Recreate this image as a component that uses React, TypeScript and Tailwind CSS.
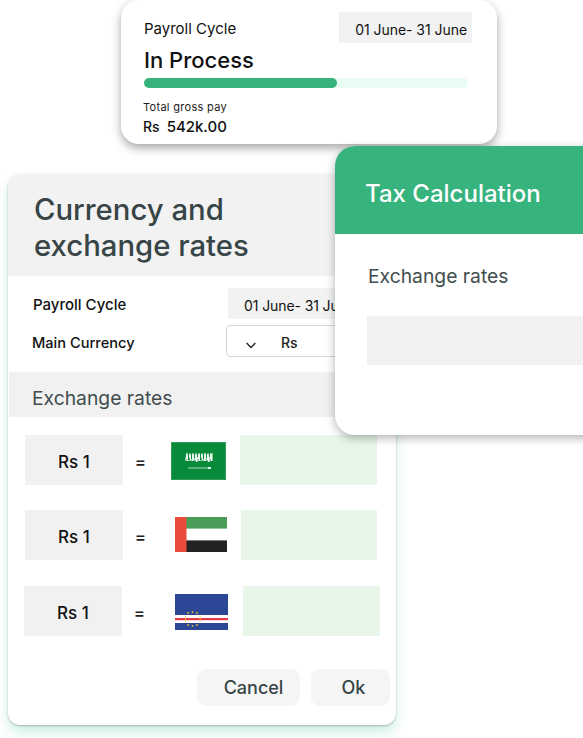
import React from "react";

function SaudiFlag() {
  const marks: number[][] = [];
  for (let i = 0; i < 27; i++) {
    marks.push([14 + i, 11 + ((i * 7) % 3), 1 + (i % 2) * 0.5, 4 + ((i * 5) % 4)]);
  }
  return (
    <svg viewBox="0 0 55 38" className="block h-[38px] w-[55px]">
      <rect width="55" height="38" fill="#078a3a" />
      <rect x="0.5" y="0.5" width="54" height="37" fill="none" stroke="#4fa96f" strokeWidth="0.6" />
      <rect x="14" y="11" width="28" height="8" fill="#8fc9a2" />
      {marks.map(([x, y, w, h], i) => (
        <rect key={i} x={x} y={y} width={w} height={h} fill={i % 3 === 0 ? "#078a3a" : "#eef7f0"} />
      ))}
      <path d="M17 26h21" stroke="#d8ecde" strokeWidth="0.8" />
      <path d="M37 25h3v2h-3z" fill="#d8ecde" />
    </svg>
  );
}

function UaeFlag() {
  return (
    <svg viewBox="0 0 52 35" className="block h-[35px] w-[52px]">
      <rect width="52" height="35" fill="#fff" />
      <rect x="11" width="41" height="11.6" fill="#4a9c58" />
      <rect x="11" y="23.4" width="41" height="11.6" fill="#222222" />
      <rect width="11.5" height="35" fill="#ea4c3c" />
    </svg>
  );
}

function CapeVerdeFlag() {
  return (
    <svg viewBox="0 0 53 36" className="block h-[36px] w-[53px]">
      <rect width="53" height="36" fill="#2c4795" />
      <rect y="21" width="53" height="8" fill="#fff" />
      <rect y="24" width="53" height="2.2" fill="#e5384c" />
      {[[17.5, 18], [13, 19], [22, 19], [13, 31], [17.5, 32], [22, 31]].map(([x, y], i) => (
        <circle key={i} cx={x} cy={y} r="0.9" fill="#e9b93a" />
      ))}
      <rect x="10" y="22.5" width="1" height="5" fill="#f3c44a" />
      <rect x="24.6" y="22.5" width="1" height="5" fill="#f3c44a" />
    </svg>
  );
}

function Row({ boxMl, flagMl, greenMl, greenW, mt, flag, flagMt }: { boxMl: string; flagMl: string; greenMl: string; greenW: string; mt: string; flag: React.ReactNode; flagMt: string }) {
  return (
    <div className={`flex h-[50px] items-start ${mt} ${boxMl}`}>
      <div className="flex h-[50px] w-[98px] items-center justify-center bg-[#f1f1f1] pt-[5px] text-[17px] font-medium text-[#111]">Rs 1</div>
      <div className="mr-[13px] flex h-[56px] w-[35px] items-center justify-center text-[17px] font-medium text-[#222]">=</div>
      <div className={`${flagMl} ${flagMt}`}>{flag}</div>
      <div className={`h-[50px] bg-[#e7f6e9] ${greenMl} ${greenW}`} />
    </div>
  );
}

export default function App() {
  return (
    <div className="relative h-[738px] w-[583px] overflow-hidden bg-white font-['Inter','Liberation_Sans',sans-serif]">
      {/* Payroll summary card */}
      <div className="absolute left-[121px] top-0 h-[144px] w-[376px] rounded-[18px] bg-white pl-[23px] pr-[25px] pt-[12px] shadow-[0_4px_10px_rgba(0,0,0,0.35)]">
        <div className="flex h-[31px] items-center justify-between">
          <span className="pt-[4px] text-[15px] font-normal text-[#111]">Payroll Cycle</span>
          <div className="flex h-[31px] w-[133px] items-center justify-end bg-[#f2f2f2] pr-[5px] pt-[3px] text-[14px] tracking-[-0.05px] text-[#111]">01 June- 31 June</div>
        </div>
        <div className="mt-[2px] text-[22px] font-medium leading-[30px] text-[#111]">In Process</div>
        <div className="mt-[3px] h-[10px] w-[324px] rounded-full bg-[#e9fcf4]">
          <div className="h-[10px] w-[193px] rounded-full bg-[#37b37e]" />
        </div>
        <div className="-ml-px mt-[11px] text-[11px] leading-[16px] tracking-[0.3px] text-[#222]">Total gross pay</div>
        <div className="-ml-px mt-[2px] flex gap-[7px] text-[15px] font-medium leading-[20px] text-[#111]">
          <span className="text-[14px]">Rs</span>
          <span>542k.00</span>
        </div>
      </div>

      {/* Currency card */}
      <div className="absolute left-[8px] top-[174px] h-[551px] w-[388px] overflow-hidden rounded-[12px] bg-white shadow-[0_1px_2px_rgba(0,0,0,0.25),0_8px_12px_rgba(150,225,195,0.45)]">
        <div className="h-[102px] bg-[#f2f2f2] pl-[26px] pt-[18px] text-[29.3px] font-medium leading-[36px] text-[#374546]">
          Currency and
          <br />
          exchange rates
        </div>
        <div className="ml-px mt-[12px] flex h-[31px] items-center pl-[24px]">
          <span className="w-[195px] pt-[4px] text-[15px] font-medium text-[#111]">Payroll Cycle</span>
          <div className="flex h-[31px] w-[160px] items-center whitespace-nowrap bg-[#f2f2f2] pl-[16px] pt-[3px] text-[14px] tracking-[-0.1px] text-[#111]">01 June- 31 June</div>
        </div>
        <div className="ml-px mt-[6px] flex h-[32px] items-center pl-[23px]">
          <span className="w-[194px] pt-[6px] text-[14.6px] font-medium text-[#111]">Main Currency</span>
          <div className="flex h-[32px] w-[160px] items-center rounded-[4px] border border-[#d5d5d5] pl-[18px] text-[14px] font-medium text-[#222]">
            <svg viewBox="0 0 12 8" className="mt-[8px] h-[7px] w-[12px]" fill="none" stroke="#222" strokeWidth="1.6">
              <path d="M1 1.2 6 6.2 11 1.2" />
            </svg>
            <span className="ml-[24px] pt-[3px]">Rs</span>
          </div>
        </div>
        <div className="ml-px mt-[15px] flex h-[45px] items-center bg-[#f1f1f1] pl-[23px] pt-[8px] text-[19.3px] text-[#3f4d4e]">Exchange rates</div>

        <Row mt="mt-[18px]" boxMl="ml-[17px]" flagMl="ml-0" flagMt="mt-[7px]" greenMl="ml-[14px]" greenW="w-[137px]" flag={<SaudiFlag />} />
        <Row mt="mt-[25px]" boxMl="ml-[17px]" flagMl="ml-[4px]" flagMt="mt-[7px]" greenMl="ml-[14px]" greenW="w-[136px]" flag={<UaeFlag />} />
        <Row mt="mt-[26px]" boxMl="ml-[16px]" flagMl="ml-[5px]" flagMt="mt-[8px]" greenMl="ml-[15px]" greenW="w-[137px]" flag={<CapeVerdeFlag />} />

        <div className="mt-[33px] flex justify-end gap-[11px] pr-[6px]">
          <div className="flex h-[37px] w-[103px] items-center justify-center rounded-[9px] bg-[#f5f5f5] pl-[10px] text-[18px] font-medium text-[#374546]">Cancel</div>
          <div className="flex h-[37px] w-[79px] items-center justify-center rounded-[9px] bg-[#f5f5f5] pl-[6px] text-[18px] font-medium text-[#374546]">Ok</div>
        </div>
      </div>

      {/* Tax calculation card */}
      <div className="absolute left-[335px] top-[146px] h-[289px] w-[280px] overflow-hidden rounded-l-[20px] bg-white shadow-[0_3px_10px_rgba(0,0,0,0.3)]">
        <div className="flex h-[88px] items-center bg-[#37b37e] pl-[30px] pt-[8px] text-[24px] font-medium text-white">Tax Calculation</div>
        <div className="mt-[29px] pl-[33px] text-[19.3px] leading-[26px] text-[#3f4d4e]">Exchange rates</div>
        <div className="ml-[32px] mt-[27px] h-[49px] bg-[#f1f1f1]" />
      </div>
    </div>
  );
}
